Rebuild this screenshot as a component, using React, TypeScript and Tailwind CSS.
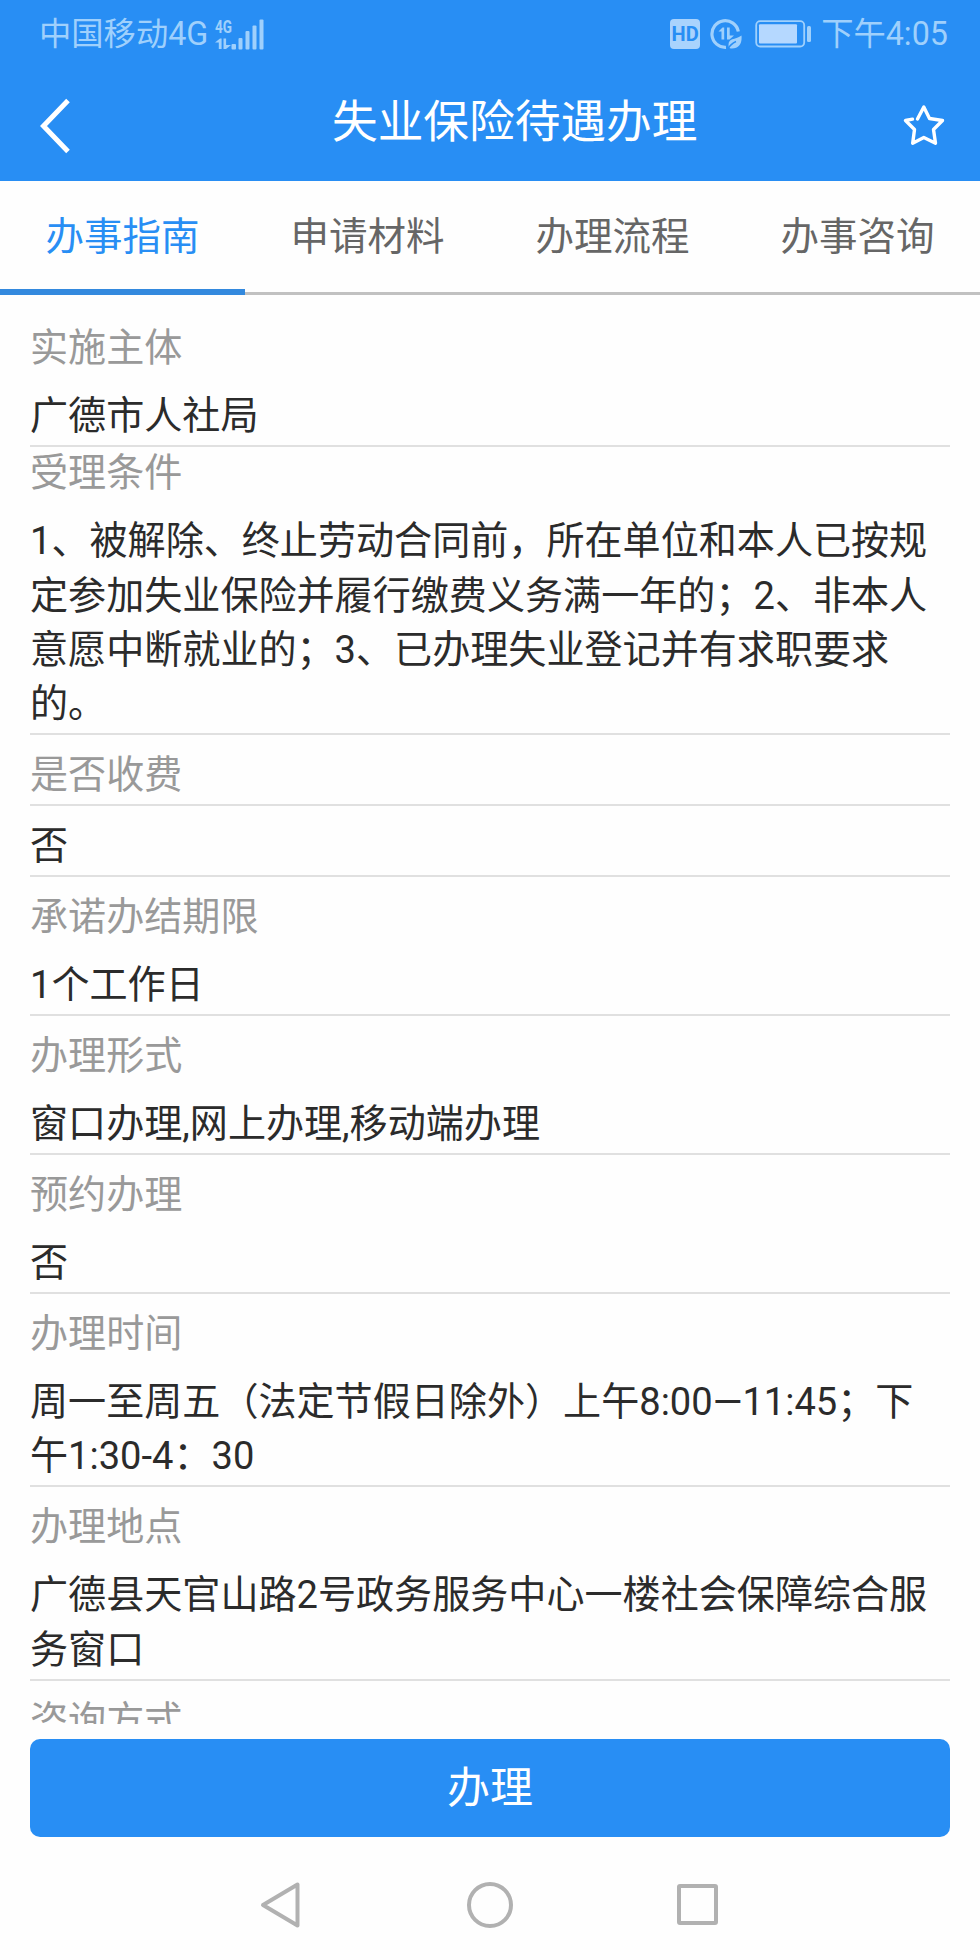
import React from 'react';

interface GuideItem {
  label: string;
  value?: string;
  labelClass: string;
  valueClass?: string;
}

const TABS = ['办事指南', '申请材料', '办理流程', '办事咨询'];

const GUIDE_ITEMS: GuideItem[] = [
  { label: '实施主体', value: '广德市人社局', labelClass: 'pt-[26px]', valueClass: 'pt-[13.5px]' },
  {
    label: '受理条件',
    value:
      '1、被解除、终止劳动合同前，所在单位和本人已按规定参加失业保险并履行缴费义务满一年的；2、非本人意愿中断就业的；3、已办理失业登记并有求职要求的。',
    labelClass: '-mt-[0.6px]',
    valueClass: 'pt-[13.3px]',
  },
  { label: '是否收费', labelClass: 'pt-[12.9px] pb-[1.4px] border-b-2 border-[#e0e0e0]', value: '否', valueClass: 'pt-[12.6px]' },
  { label: '承诺办结期限', value: '1个工作日', labelClass: 'pt-[13px]', valueClass: 'pt-[13.5px]' },
  { label: '办理形式', value: '窗口办理,网上办理,移动端办理', labelClass: 'pt-[13px]', valueClass: 'pt-[13.5px]' },
  { label: '预约办理', value: '否', labelClass: 'pt-[13px]', valueClass: 'pt-[13.5px]' },
  {
    label: '办理时间',
    value: '周一至周五（法定节假日除外）上午8:00—11:45；下午1:30-4：30',
    labelClass: 'pt-[13px]',
    valueClass: 'pt-[13.5px]',
  },
  {
    label: '办理地点',
    value: '广德县天官山路2号政务服务中心一楼社会保障综合服务窗口',
    labelClass: 'pt-[13px]',
    valueClass: 'pt-[13.5px]',
  },
  { label: '咨询方式', labelClass: 'pt-[13px]' },
];

const SignalIcon = () => (
  <svg className="w-[50px] h-[32px] ml-[7px] overflow-visible" viewBox="0 0 50 32" fill="currentColor">
    <text x="0" y="14.500" fontSize="19" fontWeight="700" textLength="17" lengthAdjust="spacingAndGlyphs" fontFamily="Roboto, sans-serif">
      4G
    </text>
    <path d="M0 24.500 5 20.500h1.600V31H3.800v-6.500zM8.500 20.500h2.600v6.500h5L11 31H8.500z" />
    <rect x="16.500" y="26" width="4.500" height="5.500" rx="1" />
    <rect x="23.500" y="20" width="4" height="11.500" rx="1" />
    <rect x="30.500" y="13" width="4" height="18.500" rx="1" />
    <rect x="37.500" y="7.500" width="4" height="24" rx="1" />
    <rect x="44.500" y="1.500" width="4" height="30" rx="1" />
  </svg>
);

const DataSaverIcon = () => (
  <svg className="w-[32px] h-[32px] ml-[10px]" viewBox="0 0 32 32" fill="none">
    <path d="M28.300 13.500A13.300 13.300 0 1 0 16 29.300" stroke="currentColor" strokeWidth="3.200" />
    <path d="M8.500 13.500 12.500 9.500h1.700V21.500h-2.700v-8zM17 9.500h2.700v8h4.300l-4.500 4H17z" fill="currentColor" />
    <path d="M31.500 17.500c.8 8-2.500 13.500-10.500 13-1.500-.2-2.500-.7-2.500-3.500 0-7 6-5 13-9.500z" fill="currentColor" />
    <path d="M18 31c2-4 4.500-6 8-7.500" stroke="#288ef4" strokeWidth="1.500" />
  </svg>
);

const BatteryIcon = () => (
  <svg className="w-[57px] h-[28px] ml-[13px]" viewBox="0 0 57 28">
    <rect x="1.200" y="1.200" width="48" height="25.300" rx="4" fill="none" stroke="currentColor" strokeWidth="1.800" />
    <rect x="4" y="4.300" width="38" height="19.300" rx="1" fill="#b5d8ff" />
    <rect x="52" y="6" width="4" height="16" rx="1.500" fill="currentColor" />
  </svg>
);

const StatusBar = () => (
  <div className="flex items-center h-[67px] pl-[39px] pr-[32px] text-[#9fd0fc] text-[32.3px]">
    <span className="mt-[2px]">中国移动4G</span>
    <SignalIcon />
    <div className="ml-auto flex items-center">
      <div className="w-[30px] h-[30px] rounded-[4px] bg-[#a9d3fd] text-[#288ef4] text-[20px] font-bold flex items-center justify-center">
        HD
      </div>
      <DataSaverIcon />
      <BatteryIcon />
      <span className="ml-[9px] mt-[2px]">下午4:05</span>
    </div>
  </div>
);

const TitleBar = () => (
  <div className="flex items-center h-[114px] text-white">
    <svg className="w-[34px] h-[58px] ml-[38px] mt-[4px]" viewBox="0 0 34 58" fill="none">
      <path d="M30 3.500 5.500 29 30 54.500" stroke="currentColor" strokeWidth="5" />
    </svg>
    <h1 className="ml-[260px] -mt-[2px] text-[45.7px]">失业保险待遇办理</h1>
    <svg className="w-[44px] h-[44px] ml-auto mr-[34px]" viewBox="0 0 44 44" fill="none">
      <path
        d="M15.500 17 21.800 5 27.500 16.500 40.500 18.500 31.500 27.500 33.500 41.300 21.800 35.500 10.700 41.300 12.500 27.500 3.500 18.500 10.500 17.200"
        stroke="currentColor"
        strokeWidth="3.400"
        strokeLinejoin="round"
        strokeLinecap="round"
      />
    </svg>
  </div>
);

export default function App() {
  return (
    <div className="w-[980px] h-[1960px] overflow-hidden flex flex-col bg-[#fefefe] font-['Roboto','Noto_Sans_CJK_SC',sans-serif]">
      <header className="bg-[#288ef4] h-[181px] shrink-0">
        <StatusBar />
        <TitleBar />
      </header>

      <nav className="grid grid-cols-4 h-[114px] shrink-0 text-[38.5px] text-[#666]">
        {TABS.map((tab, index) => (
          <div
            key={tab}
            className={
              index === 0
                ? 'flex items-center justify-center pt-[4px] border-b-[6px] border-[#3389de] text-[#288ef4]'
                : 'flex items-center justify-center pt-[1px] border-b-[3px] border-[#c1c1c1]'
            }
          >
            {tab}
          </div>
        ))}
      </nav>

      <main className="h-[1429px] shrink-0 overflow-hidden px-[30px] text-[38.1px] leading-[54.4px] text-[#2b2b2b]">
        {GUIDE_ITEMS.map((item) => (
          <section key={item.label}>
            <div className={`text-[#999] ${item.labelClass}`}>{item.label}</div>
            {item.value && (
              <div className={`pb-[1.7px] border-b-2 border-[#e0e0e0] ${item.valueClass}`}>{item.value}</div>
            )}
          </section>
        ))}
      </main>

      <button className="mx-[30px] mt-[15px] h-[98px] shrink-0 rounded-[10px] bg-[#288ef4] text-white text-[43px]">
        办理
      </button>

      {/* Android navigation keys */}
      <footer className="flex items-center h-[135px] shrink-0 pl-[260px] text-[#b1b1b1]">
        <svg className="w-[42px] h-[48px]" viewBox="0 0 42 48" fill="none" stroke="currentColor" strokeWidth="4" strokeLinejoin="round">
          <path d="M37.500 3.500v41L3 24z" />
        </svg>
        <div className="ml-[165px] w-[46px] h-[46px] rounded-full border-4 border-[#b1b1b1]" />
        <div className="ml-[164px] w-[41px] h-[41px] rounded-[3px] border-4 border-[#b1b1b1]" />
      </footer>
    </div>
  );
}
